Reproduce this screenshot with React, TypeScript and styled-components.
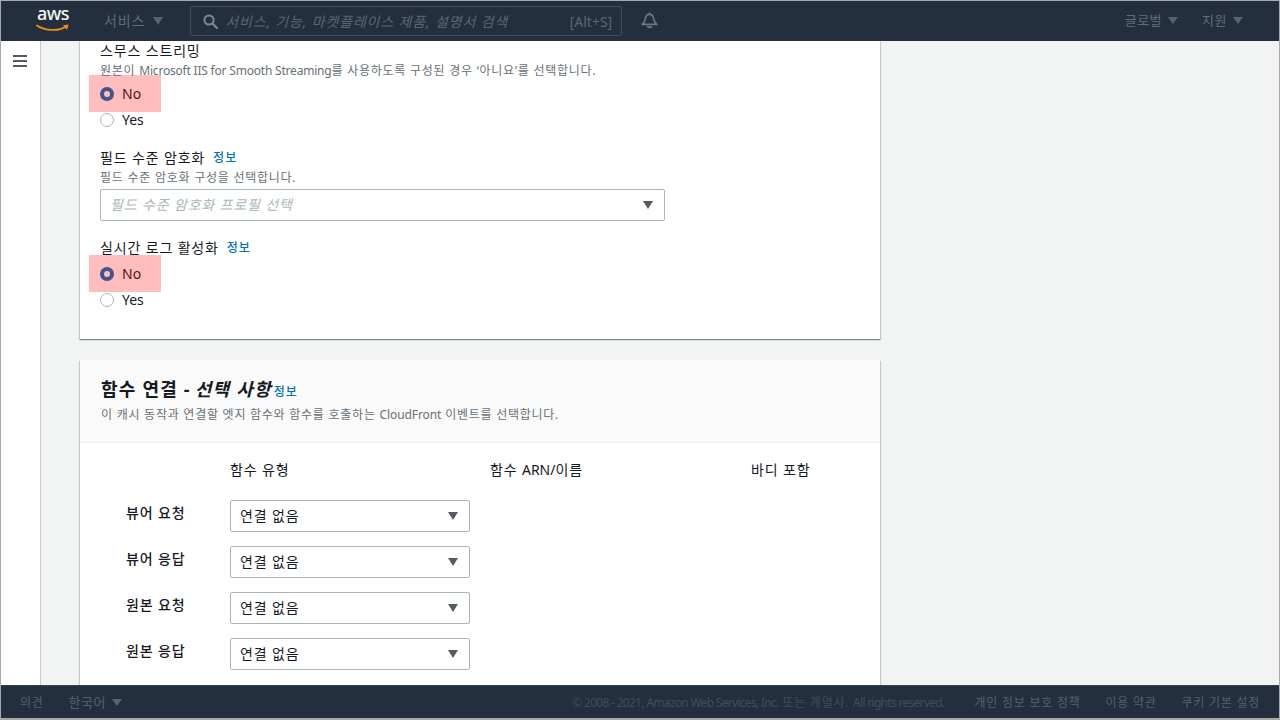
import React from 'react';
import styled, { createGlobalStyle } from 'styled-components';

const FONT = `"Noto Sans", "Noto Sans CJK KR", sans-serif`;

const GlobalStyle = createGlobalStyle`
  html, body {
    margin: 0;
    padding: 0;
    height: 100%;
    overflow: hidden;
  }
  body {
    font-family: ${FONT};
    font-size: 14px;
    color: #16191f;
    letter-spacing: 0.85px;
  }
`;

const Frame = styled.div`
  width: 1280px;
  height: 720px;
  box-sizing: border-box;
  border: 1px solid #a8a8a8;
  border-bottom-width: 2px;
  display: flex;
  flex-direction: column;
  overflow: hidden;
`;

// latin runs are set tighter than the hangul around them
const Latin = styled.span<{ $spacing?: number }>`
  letter-spacing: ${(p) => p.$spacing ?? 0}px;
`;

const TopBar = styled.header`
  flex: none;
  height: 40px;
  background: #232f3e;
  display: flex;
  align-items: center;
  color: #626d7b;
  font-size: 14px;
`;

const Logo = styled.div`
  width: 34px;
  margin-left: 35px;
  height: 30px;
  position: relative;
  color: #f4f5f6;
  font-size: 18px;
  font-weight: 500;
  line-height: 15px;
  letter-spacing: -0.5px;
  text-align: center;
`;

const Smile = styled.svg`
  position: absolute;
  left: 0;
  top: 17px;
`;

const Caret = styled.span<{ $size?: number; $color?: string }>`
  display: block;
  flex: none;
  width: 0;
  height: 0;
  border-left: ${(p) => (p.$size ?? 10) / 2}px solid transparent;
  border-right: ${(p) => (p.$size ?? 10) / 2}px solid transparent;
  border-top: ${(p) => ((p.$size ?? 10) * 3) / 4}px solid ${(p) => p.$color ?? '#59636f'};
`;

const SelectCaret = styled(Caret)`
  margin-top: 2px;
`;

const Menu = styled.div<{ $left: number; $small?: boolean; $flush?: boolean }>`
  margin-left: ${(p) => p.$left}px;
  padding-bottom: ${(p) => (p.$flush ? 1 : 3)}px;
  display: flex;
  align-items: center;
  gap: ${(p) => (p.$small ? 6 : 8)}px;
  font-size: ${(p) => (p.$small ? 13 : 14)}px;
  letter-spacing: ${(p) => (p.$small ? 0.5 : 0.85)}px;
  ${Caret} {
    margin-top: 2px;
  }
`;

const SearchBox = styled.div`
  width: 432px;
  height: 30px;
  box-sizing: border-box;
  margin-left: 27px;
  border: 1px solid #414d5c;
  border-radius: 2px;
  display: flex;
  align-items: center;
  padding: 0 9px 0 12px;
  color: #5b6674;
`;

const SearchText = styled.span`
  flex: 1;
  margin-left: 7px;
  font-style: italic;
  font-size: 14px;
  letter-spacing: 0.85px;
`;

const Bell = styled.svg`
  margin-left: 19px;
`;

const Spacer = styled.div<{ $width?: number }>`
  flex: ${(p) => (p.$width ? 'none' : 1)};
  width: ${(p) => p.$width ?? 0}px;
`;

const Body = styled.div`
  flex: 1;
  min-height: 0;
  display: flex;
  background: #f2f3f3;
  overflow: hidden;
`;

const SideRail = styled.aside`
  flex: none;
  width: 27px;
  background: #fff;
  border-right: 1px solid #c6cbcc;
  padding-top: 14px;
  padding-left: 12px;
`;

const MenuIcon = styled.svg`
  display: block;
`;

const Content = styled.main`
  flex: none;
  width: 800px;
  margin-left: 39px;
  display: flex;
  flex-direction: column;
  gap: 21px;
`;

const Card = styled.section`
  flex: none;
  background: #fff;
  box-shadow: 0 1px 1px 0 rgba(0, 28, 36, 0.3), 1px 1px 1px 0 rgba(0, 28, 36, 0.15),
    -1px 1px 1px 0 rgba(0, 28, 36, 0.15);
`;

const CardBody = styled.div`
  padding: 0 20px 26px;
`;

const Label = styled.div<{ $top?: number }>`
  margin-top: ${(p) => p.$top ?? 0}px;
  line-height: 20px;
  font-size: 14px;
  display: flex;
  gap: 8px;
`;

const InfoLink = styled.a`
  color: #0073bb;
  font-size: 12px;
  font-weight: 500;
  letter-spacing: 1px;
`;

const Hint = styled.div`
  margin-top: 2px;
  font-size: 12px;
  line-height: 16px;
  color: #687078;
  letter-spacing: 0.75px;
`;

const Options = styled.div<{ $top: number }>`
  margin-top: ${(p) => p.$top}px;
`;

const OptionRow = styled.div<{ $marked?: boolean }>`
  position: relative;
  height: 26px;
  display: flex;
  align-items: center;
  gap: 8px;
  line-height: 20px;
  color: #16191f;
  letter-spacing: 0;
  ${(p) =>
    p.$marked &&
    `
    &::after {
      content: '';
      position: absolute;
      left: -11px;
      top: -6px;
      width: 72px;
      height: 37px;
      background: rgba(255, 0, 0, 0.26);
    }
  `}
`;

const Radio = styled.span<{ $on?: boolean }>`
  flex: none;
  box-sizing: border-box;
  width: 14px;
  height: 14px;
  border-radius: 50%;
  background: #fff;
  border: ${(p) => (p.$on ? '4px solid #0073bb' : '1px solid #aab7b8')};
`;

const SelectBox = styled.div<{ $width: number; $muted?: boolean }>`
  width: ${(p) => p.$width}px;
  height: 32px;
  box-sizing: border-box;
  border: 1px solid #aab7b8;
  border-radius: 2px;
  background: #fff;
  display: flex;
  align-items: center;
  justify-content: space-between;
  padding: 0 11px 2px 9px;
  font-size: 14px;
  color: ${(p) => (p.$muted ? '#aab7b8' : '#16191f')};
  font-style: ${(p) => (p.$muted ? 'italic' : 'normal')};
`;

const CardHead = styled.div`
  height: 83px;
  box-sizing: border-box;
  padding: 18px 20px 0 21px;
  background: #fafafa;
  border-bottom: 1px solid #eaeded;
`;

const Title = styled.h2`
  margin: 0 0 4px;
  font-size: 18px;
  line-height: 22px;
  font-weight: 700;
  letter-spacing: 1.2px;
  display: flex;
  align-items: baseline;
  gap: 2px;
  em {
    font-style: italic;
    margin-left: 2px;
  }
`;

const MappingGrid = styled.div`
  display: grid;
  grid-template-columns: 150px 260px 261px 1fr;
  padding: 17px 0 40px;
  row-gap: 14px;
  align-items: center;
`;

const ColHead = styled.div`
  line-height: 20px;
  margin-bottom: 6px;
`;

const RowName = styled.div`
  padding-left: 46px;
  padding-bottom: 6px;
  font-weight: 500;
  line-height: 20px;
`;

const BottomBar = styled.footer`
  flex: none;
  height: 33px;
  background: #232f3e;
  border-top: 1px solid #36414f;
  box-sizing: border-box;
  display: flex;
  align-items: center;
  padding: 0 19px;
  font-size: 12px;
  letter-spacing: 0.75px;
  color: #56616f;
`;

const Copyright = styled.span`
  color: #414d5b;
  margin-right: 5px;
`;

const FooterLink = styled.span`
  margin-left: 25px;
  &:first-of-type {
    margin-left: 0;
  }
`;

const rows = ['뷰어 요청', '뷰어 응답', '원본 요청', '원본 응답'];

const App = () => (
  <Frame>
    <GlobalStyle />
    <TopBar>
      <Logo>
        aws
        <Smile width="34" height="10" viewBox="0 0 34 10">
          <path d="M1 2.5C9 8 23 8.5 30 3.5" fill="none" stroke="#f29111" strokeWidth="1.8" strokeLinecap="round" />
          <path d="M27 2.2L32.6 1.6L31 7Z" fill="#f29111" />
        </Smile>
      </Logo>
      <Menu $left={34}>
        서비스 <Caret $size={11} />
      </Menu>
      <SearchBox>
        <svg width="15" height="15" viewBox="0 0 15 15">
          <circle cx="6" cy="6" r="4.6" fill="none" stroke="#7d8895" strokeWidth="2" />
          <path d="M9.5 9.5L14 14" stroke="#7d8895" strokeWidth="2.2" strokeLinecap="round" />
        </svg>
        <SearchText>서비스, 기능, 마켓플레이스 제품, 설명서 검색</SearchText>
        <Latin>[Alt+S]</Latin>
      </SearchBox>
      <Bell width="17" height="18" viewBox="0 0 17 18">
        <path
          d="M8.5 0.5V2.4M8.5 2.4C5.6 2.4 4.6 4.4 4.4 6.6C4.2 9.2 2.8 10.8 1.2 12.4H15.8C14.2 10.8 12.8 9.2 12.6 6.6C12.4 4.4 11.4 2.4 8.5 2.4Z"
          fill="none"
          stroke="#6d7886"
          strokeWidth="1.6"
          strokeLinejoin="round"
        />
        <path d="M6.3 14C6.7 15.8 10.3 15.8 10.7 14" fill="none" stroke="#6d7886" strokeWidth="1.6" />
      </Bell>
      <Spacer />
      <Menu $left={0} $small>
        글로벌 <Caret />
      </Menu>
      <Menu $left={24} $small>
        지원 <Caret />
      </Menu>
      <Spacer $width={36} />
    </TopBar>
    <Body>
      <SideRail>
        <MenuIcon width="14" height="12" viewBox="0 0 14 12">
          <path d="M0 1H14M0 6H14M0 11H14" stroke="#545b64" strokeWidth="2" />
        </MenuIcon>
      </SideRail>
      <Content>
        <Card>
          <CardBody>
            <Label>스무스 스트리밍</Label>
            <Hint>
              원본이 <Latin $spacing={-0.2}>Microsoft IIS for Smooth Streaming</Latin>를 사용하도록 구성된 경우 ‘아니요’를 선택합니다.
            </Hint>
            <Options $top={2}>
              <OptionRow $marked>
                <Radio $on />
                No
              </OptionRow>
              <OptionRow>
                <Radio />
                Yes
              </OptionRow>
            </Options>
            <Label $top={15}>
              필드 수준 암호화 <InfoLink>정보</InfoLink>
            </Label>
            <Hint>필드 수준 암호화 구성을 선택합니다.</Hint>
            <Options $top={3}>
              <SelectBox $width={565} $muted>
                필드 수준 암호화 프로필 선택
                <SelectCaret $size={11} $color="#545b64" />
              </SelectBox>
            </Options>
            <Label $top={17}>
              실시간 로그 활성화 <InfoLink>정보</InfoLink>
            </Label>
            <Options $top={3}>
              <OptionRow $marked>
                <Radio $on />
                No
              </OptionRow>
              <OptionRow>
                <Radio />
                Yes
              </OptionRow>
            </Options>
          </CardBody>
        </Card>
        <Card>
          <CardHead>
            <Title>
              함수 연결 - <em>선택 사항</em>
              <InfoLink>정보</InfoLink>
            </Title>
            <Hint>
              이 캐시 동작과 연결할 엣지 함수와 함수를 호출하는 <Latin $spacing={-0.1}>CloudFront</Latin> 이벤트를 선택합니다.
            </Hint>
          </CardHead>
          <MappingGrid>
            <span />
            <ColHead>함수 유형</ColHead>
            <ColHead>
              함수 <Latin>ARN/</Latin>이름
            </ColHead>
            <ColHead>바디 포함</ColHead>
            {rows.map((name) => (
              <React.Fragment key={name}>
                <RowName>{name}</RowName>
                <SelectBox $width={240}>
                  연결 없음
                  <SelectCaret $size={11} $color="#545b64" />
                </SelectBox>
                <span />
                <span />
              </React.Fragment>
            ))}
          </MappingGrid>
        </Card>
      </Content>
    </Body>
    <BottomBar>
      <FooterLink>의견</FooterLink>
      <Menu $left={25} $small $flush>
        한국어 <Caret />
      </Menu>
      <Spacer />
      <Copyright>
        <Latin $spacing={-0.7}>© 2008 - 2021, Amazon Web Services, Inc.</Latin> 또는 계열사.{' '}
        <Latin $spacing={-0.7}>All rights reserved.</Latin>
      </Copyright>
      <FooterLink>개인 정보 보호 정책</FooterLink>
      <FooterLink>이용 약관</FooterLink>
      <FooterLink>쿠키 기본 설정</FooterLink>
    </BottomBar>
  </Frame>
);

export default App;
